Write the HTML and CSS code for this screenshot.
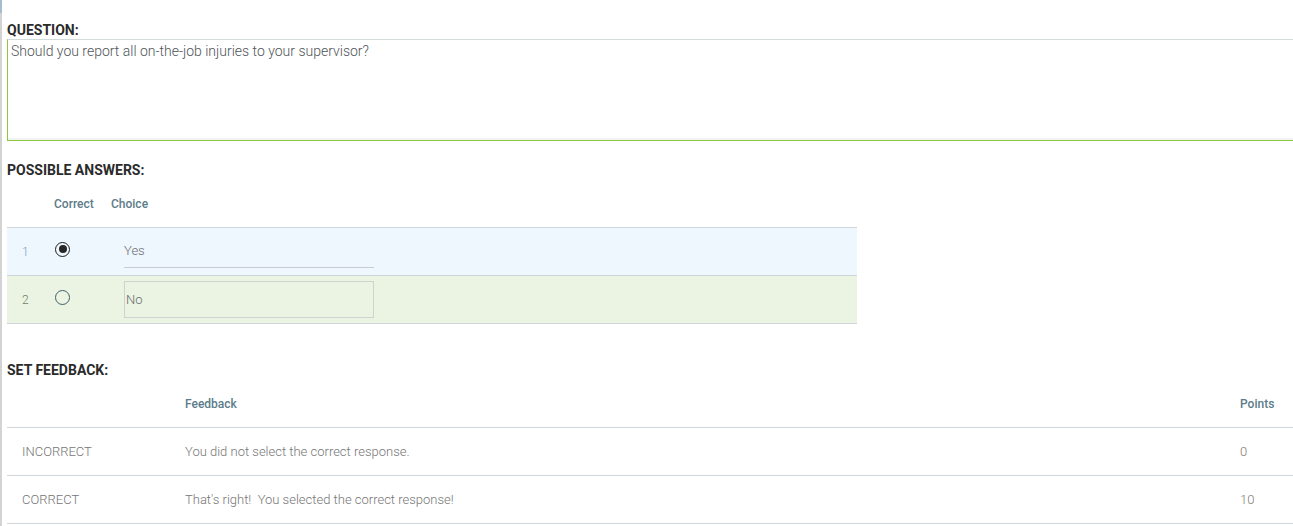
FILE: index.html
```html
<!DOCTYPE html>
<html>
<head>
<meta charset="utf-8">
<link rel="stylesheet" href="styles.css">
</head>
<body>
<div class="page">
  <div class="section-label label-question">QUESTION:</div>
  <div class="question-box">Should you report all on-the-job injuries to your supervisor?</div>

  <div class="section-label label-answers">POSSIBLE ANSWERS:</div>
  <div class="answers">
    <div class="ans-head">
      <span class="col-correct">Correct</span>
      <span class="col-choice">Choice</span>
    </div>
    <div class="ans-body">
      <div class="ans-row row-blue">
        <span class="num num-blue">1</span>
        <span class="radio-cell"><span class="radio checked"></span></span>
        <span class="choice-input underline">Yes</span>
      </div>
      <div class="ans-row row-green">
        <span class="num num-green">2</span>
        <span class="radio-cell"><span class="radio"></span></span>
        <span class="choice-input boxed">No</span>
      </div>
    </div>
  </div>

  <div class="section-label label-feedback">SET FEEDBACK:</div>
  <div class="feedback">
    <div class="fb-head">
      <span class="fb-c1"></span>
      <span class="fb-c2">Feedback</span>
      <span class="fb-c3">Points</span>
    </div>
    <div class="fb-body">
      <div class="fb-row">
        <span class="fb-c1">INCORRECT</span>
        <span class="fb-c2">You did not select the correct response.</span>
        <span class="fb-c3 pts">0</span>
      </div>
      <div class="fb-row">
        <span class="fb-c1">CORRECT</span>
        <span class="fb-c2">That's right!&nbsp; You selected the correct response!</span>
        <span class="fb-c3 pts">10</span>
      </div>
    </div>
  </div>
</div>
</body>
</html>
```

FILE: styles.css
```css
html, body {
  margin: 0;
  padding: 0;
  background: #ffffff;
}

body {
  font-family: Roboto, "Liberation Sans", Arial, sans-serif;
  width: 1293px;
  height: 526px;
  overflow: hidden;
}

.page {
  position: relative;
  border-left: 2px solid #d3d3d3;
  padding-left: 5px;
  padding-top: 22px;
  height: 526px;
  box-sizing: border-box;
}

.page::before {
  content: "";
  position: absolute;
  left: -2px;
  top: 0;
  width: 2px;
  height: 13px;
  background: #a9bccd;
}

.section-label {
  font-size: 14px;
  font-weight: 700;
  line-height: 16px;
  height: 16px;
  color: #2b2b2b;
}

.question-box {
  margin-top: 1px;
  height: 102px;
  box-sizing: border-box;
  border-top: 1px solid #d3dcdc;
  border-left: 1px solid #8cc63f;
  border-bottom: 1px solid #8cc63f;
  box-shadow: inset 0 -2px 0 #f2f4f4;
  padding: 3px 3px;
  font-size: 14px;
  font-weight: 300;
  line-height: 17px;
  color: #4f5357;
  margin-right: -10px;
}

.label-answers {
  margin-top: 21px;
}

.answers {
  width: 850px;
}

.ans-head {
  display: flex;
  align-items: center;
  height: 49px;
  padding-top: 2px;
  box-sizing: border-box;
  font-size: 12px;
  font-weight: 500;
  color: #5b7c8a;
}

.col-correct {
  margin-left: 47px;
  width: 57px;
}

.ans-body {
  border-top: 1px solid #ced6dc;
}

.ans-row {
  display: flex;
  align-items: center;
  height: 47px;
  border-bottom: 1px solid #ced6dc;
  font-size: 12px;
}

.row-blue {
  background: #eef6fe;
}

.row-green {
  background: #ebf4e2;
}

.num {
  width: 48px;
  padding-left: 15px;
  box-sizing: border-box;
  font-weight: 300;
}

.num-blue {
  color: #6f9fbf;
}

.num-green {
  color: #72806b;
}

.radio-cell {
  width: 69px;
  display: flex;
  align-items: center;
  margin-top: -5px;
}

.radio {
  width: 15px;
  height: 15px;
  box-sizing: border-box;
  border-radius: 50%;
  border: 1.6px solid #3f5f6d;
  display: flex;
  align-items: center;
  justify-content: center;
}

.radio.checked {
  border-color: #1e1e1e;
}

.radio.checked::after {
  content: "";
  width: 8px;
  height: 8px;
  border-radius: 50%;
  background: #262626;
}

.choice-input {
  width: 250px;
  height: 37px;
  box-sizing: border-box;
  display: flex;
  align-items: center;
  font-size: 13px;
  font-weight: 300;
  color: #6a6c6e;
}

.underline {
  border-bottom: 1px solid #c6ccd2;
  margin-top: -4px;
  padding-top: 3px;
}

.boxed {
  border: 1px solid #cdd3cf;
  padding-left: 1px;
}

.label-feedback {
  margin-top: 38px;
}

.fb-head {
  display: flex;
  align-items: center;
  height: 49px;
  padding-top: 2px;
  box-sizing: border-box;
  font-size: 12px;
  font-weight: 500;
  color: #5b7c8a;
}

.fb-body {
  border-top: 1px solid #ced6dc;
}

.fb-row {
  display: flex;
  align-items: center;
  height: 47px;
  border-bottom: 1px solid #ced6dc;
  font-size: 13px;
  font-weight: 300;
  color: #767676;
}

.fb-c1 {
  width: 178px;
  padding-left: 15px;
  box-sizing: border-box;
}

.fb-c2 {
  width: 1055px;
}

.fb-c3 {
  flex: 1;
}

.pts {
  color: #857a74;
}
```
